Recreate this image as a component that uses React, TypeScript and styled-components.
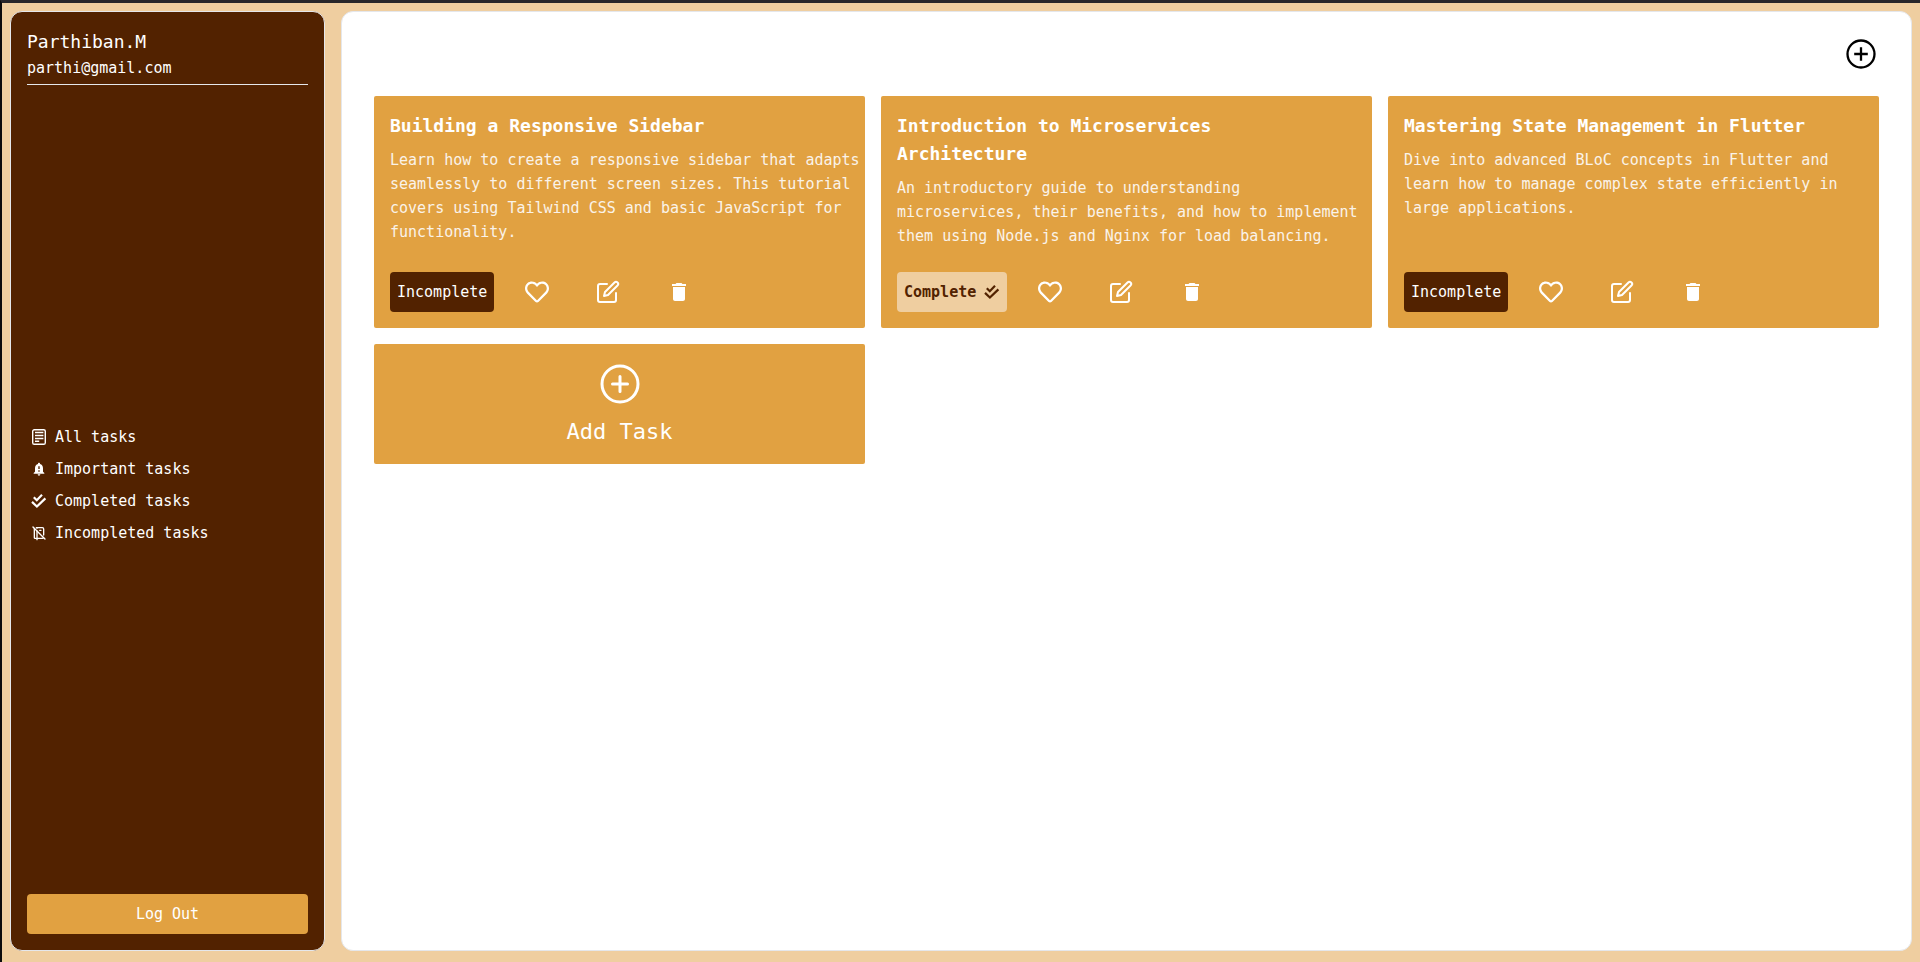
import React from "react";
import styled, { createGlobalStyle } from "styled-components";
import { MdDelete, MdNotificationImportant } from "react-icons/md";
import { FaRegHeart } from "react-icons/fa";
import { TbNotebookOff } from "react-icons/tb";
import { IoAddCircleOutline } from "react-icons/io5";
import { FiEdit } from "react-icons/fi";

const GlobalStyle = createGlobalStyle`
  *, *::before, *::after { box-sizing: border-box; }
  body { margin: 0; }
  body, button {
    font-family: "DejaVu Sans Mono", monospace;
    font-size: 15px;
    line-height: 24px;
    color: #ffffff;
  }
  h1, h2, p, ul { margin: 0; padding: 0; }
  ul { list-style: none; }
  button { border: 0; padding: 0; background: none; cursor: pointer; }
  svg { display: block; flex: none; }
`;

const Page = styled.div`
  display: flex;
  gap: 16px;
  min-height: 100vh;
  padding: 8px 8px 11px;
  background: #efcea0;
  border-top: 3px solid #28272b;
  border-left: 2px solid #0b0b0d;
`;

const Sidebar = styled.aside`
  flex: 0 0 315px;
  display: flex;
  flex-direction: column;
  justify-content: space-between;
  padding: 16px;
  background: #522200;
  border: 1px solid #e5e7eb;
  border-radius: 12px;
`;

const Profile = styled.header`
  padding-bottom: 4px;
  border-bottom: 1px solid #e5e7eb;
`;

const UserName = styled.h1`
  font-size: 18px;
  font-weight: 400;
  line-height: 28px;
`;

const Menu = styled.ul`
  display: flex;
  flex-direction: column;
  gap: 8px;
  padding: 0 4px 10px;
`;

const MenuLink = styled.a`
  display: flex;
  align-items: center;
  gap: 8px;
  color: inherit;
  text-decoration: none;
`;

const LogOutButton = styled.button`
  height: 40px;
  border-radius: 4px;
  background: #e1a141;
`;

const Main = styled.main`
  flex: 1;
  min-width: 0;
  background: #ffffff;
  border: 1px solid #e5e7eb;
  border-radius: 12px;
`;

const Toolbar = styled.div`
  display: flex;
  justify-content: flex-end;
  padding: 24px 32px;
`;

const AddButton = styled.button`
  color: #000000;
`;

const TaskGrid = styled.div`
  display: grid;
  grid-template-columns: repeat(3, minmax(0, 1fr));
  gap: 16px;
  padding: 0 32px 32px;
`;

const Card = styled.article`
  display: flex;
  flex-direction: column;
  justify-content: space-between;
  gap: 24px;
  padding: 16px 4px 16px 16px;
  border-radius: 2px;
  background: #e1a141;
`;

const CardTitle = styled.h2`
  padding-right: 24px;
  font-size: 18px;
  font-weight: 700;
  line-height: 28px;
`;

const Description = styled.p`
  margin-top: 8px;
  color: #faf3e9;
`;

const CardActions = styled.div`
  display: flex;
  align-items: center;
  gap: 47px;
`;

const StatusButton = styled.button<{ $complete: boolean }>`
  display: flex;
  align-items: center;
  gap: 8px;
  height: 40px;
  margin-right: -16px;
  padding: 0 7px;
  border-radius: 4px;
  font-weight: ${(p) => (p.$complete ? 700 : 400)};
  color: ${(p) => (p.$complete ? "#522200" : "#ffffff")};
  background: ${(p) => (p.$complete ? "#efcea0" : "#522200")};
`;

const IconButton = styled.button`
  color: #ffffff;
`;

const AddCard = styled.button`
  display: flex;
  flex-direction: column;
  align-items: center;
  gap: 8px;
  padding: 16px;
  border-radius: 2px;
  background: #e1a141;
  font-size: 22px;
  line-height: 32px;
`;

const NotesIcon = () => (
  <svg width="16" height="16" viewBox="0 0 16 16" fill="none" stroke="currentColor" strokeWidth="1.4" aria-hidden="true">
    <rect x="1.7" y="0.7" width="12.6" height="14.6" rx="1.6" />
    <path d="M4 3.5h8.4M4 6.5h8.4M4 9.5h8.4M4 12.2h4.2" />
  </svg>
);

const DoubleCheckIcon = () => (
  <svg width="16" height="16" viewBox="0 0 16 16" fill="none" stroke="currentColor" strokeWidth="2.2" aria-hidden="true">
    <path d="M2.8 4.2 5.8 7.2 11 1.8M1 8.9 5.9 13.5 14.4 5.4" />
  </svg>
);

const PlusCircleIcon = () => (
  <svg width="36" height="36" viewBox="0 0 36 36" fill="none" stroke="currentColor" strokeWidth="2.3" aria-hidden="true">
    <circle cx="18" cy="18" r="13.5" />
    <path d="M18 11.2v13.6M11.2 18h13.6" />
  </svg>
);

const menu = [
  { label: "All tasks", icon: <NotesIcon /> },
  { label: "Important tasks", icon: <MdNotificationImportant size={16} /> },
  { label: "Completed tasks", icon: <DoubleCheckIcon /> },
  { label: "Incompleted tasks", icon: <TbNotebookOff size={16} /> },
];

const tasks = [
  {
    title: "Building a Responsive Sidebar",
    text: "Learn how to create a responsive sidebar that adapts seamlessly to different screen sizes. This tutorial covers using Tailwind CSS and basic JavaScript for functionality.",
    complete: false,
  },
  {
    title: "Introduction to Microservices Architecture",
    text: "An introductory guide to understanding microservices, their benefits, and how to implement them using Node.js and Nginx for load balancing.",
    complete: true,
  },
  {
    title: "Mastering State Management in Flutter",
    text: "Dive into advanced BLoC concepts in Flutter and learn how to manage complex state efficiently in large applications.",
    complete: false,
  },
];

export default function App() {
  return (
    <>
      <GlobalStyle />
      <Page>
        <Sidebar>
          <Profile>
            <UserName>Parthiban.M</UserName>
            <p>parthi@gmail.com</p>
          </Profile>
          <nav>
            <Menu>
              {menu.map(({ label, icon }) => (
                <li key={label}>
                  <MenuLink href="#">
                    {icon}
                    {label}
                  </MenuLink>
                </li>
              ))}
            </Menu>
          </nav>
          <LogOutButton>Log Out</LogOutButton>
        </Sidebar>
        <Main>
          <Toolbar>
            <AddButton aria-label="Add task">
              <PlusCircleIcon />
            </AddButton>
          </Toolbar>
          <TaskGrid>
            {tasks.map((task) => (
              <Card key={task.title}>
                <div>
                  <CardTitle>{task.title}</CardTitle>
                  <Description>{task.text}</Description>
                </div>
                <CardActions>
                  <StatusButton $complete={task.complete}>
                    {task.complete ? "Complete" : "Incomplete"}
                    {task.complete && <DoubleCheckIcon />}
                  </StatusButton>
                  <IconButton aria-label="Mark as important">
                    <FaRegHeart size={24} />
                  </IconButton>
                  <IconButton aria-label="Edit">
                    <FiEdit size={24} />
                  </IconButton>
                  <IconButton aria-label="Delete">
                    <MdDelete size={24} />
                  </IconButton>
                </CardActions>
              </Card>
            ))}
            <AddCard>
              <IoAddCircleOutline size={48} />
              Add Task
            </AddCard>
          </TaskGrid>
        </Main>
      </Page>
    </>
  );
}
